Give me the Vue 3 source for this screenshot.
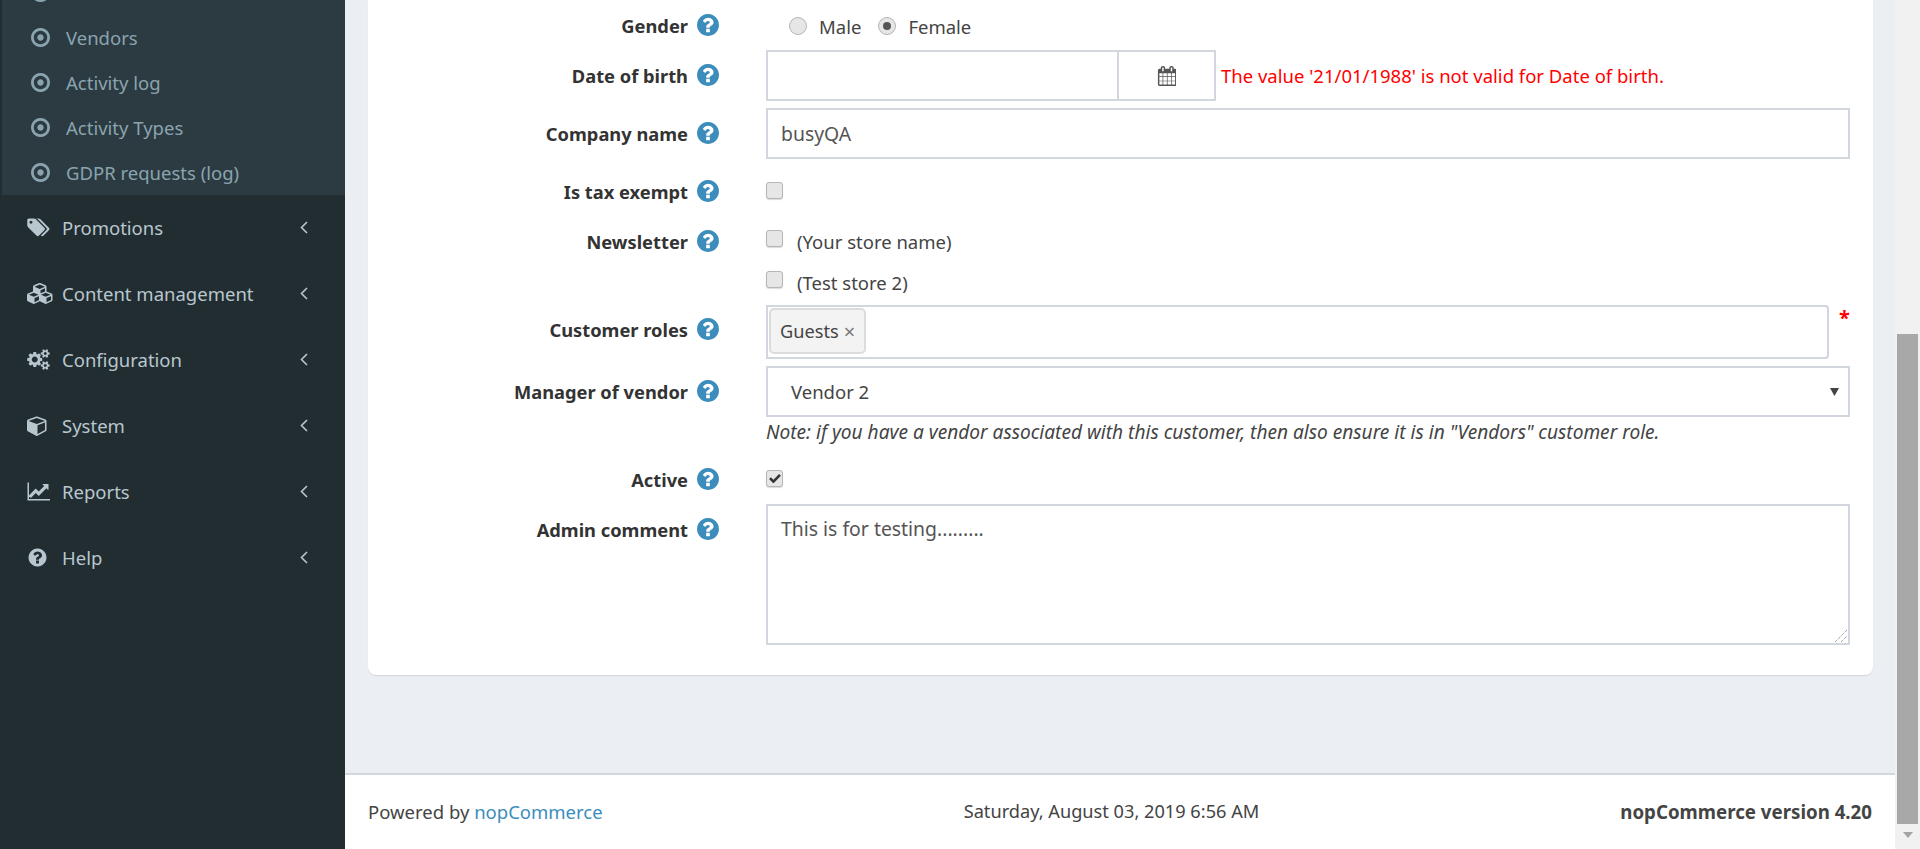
<script setup>
const subItems = ['', 'Vendors', 'Activity log', 'Activity Types', 'GDPR requests (log)'];
const navItems = [
  { label: 'Promotions', box: '0 0 1920 1792', w: 23, path: 'M448 448q0-53-37.5-90.5t-90.5-37.5-90.5 37.5-37.5 90.5 37.5 90.5 90.5 37.5 90.5-37.5 37.5-90.5zm1067 576q0 53-37 90l-491 492q-39 37-91 37-53 0-90-37l-715-716q-38-37-64.5-101t-26.5-117v-416q0-52 38-90t90-38h416q53 0 117 26.5t102 64.5l715 714q37 39 37 91zm384 0q0 53-37 90l-491 492q-39 37-91 37-36 0-59-14t-53-45l470-470q37-37 37-90 0-52-37-91l-715-714q-38-38-102-64.5t-117-26.5h224q53 0 117 26.5t102 64.5l715 714q37 39 37 91z' },
  { label: 'Content management', box: '0 0 2048 1792', w: 27, path: 'M512 1632l384-192v-314l-384 164v342zm-64-454l404-173-404-173-404 173zm1088 454l384-192v-314l-384 164v342zm-64-454l404-173-404-173-404 173zm-448-293l384-165v-266l-384 164v267zm-64-379l441-189-441-189-441 189zm1088 518v416q0 36-19 67t-52 47l-448 224q-25 14-57 14t-57-14l-448-224q-4-2-7-4-2 2-7 4l-448 224q-25 14-57 14t-57-14l-448-224q-33-16-52-47t-19-67v-416q0-38 21.5-70t56.5-48l434-186v-400q0-38 21.5-70t56.5-48l448-192q23-10 50-10t50 10l448 192q35 16 56.5 48t21.5 70v400l434 186q36 16 57 48t21 70z' },
  { label: 'Configuration', box: '0 0 1920 1792', w: 23, path: 'M896 896q0-106-75-181t-181-75-181 75-75 181 75 181 181 75 181-75 75-181zm768 512q0-52-38-90t-90-38-90 38-38 90q0 53 37.5 90.5t90.5 37.5 90.5-37.5 37.5-90.5zm0-1024q0-52-38-90t-90-38-90 38-38 90q0 53 37.5 90.5t90.5 37.5 90.5-37.5 37.5-90.5zm-384 421v185q0 10-7 19.5t-16 10.5l-155 24q-11 35-32 76 34 48 90 115 7 11 7 20 0 12-7 19-23 30-82.5 89.5t-78.5 59.5q-11 0-21-7l-115-90q-37 19-77 31-11 108-23 155-7 24-30 24h-186q-11 0-20-7.5t-10-17.5l-23-153q-34-10-75-31l-118 89q-7 7-20 7-11 0-21-8-144-133-144-160 0-9 7-19 10-14 41-53t47-61q-23-44-35-82l-152-24q-10-1-17-9.5t-7-19.5v-185q0-10 7-19.5t16-10.5l155-24q11-35 32-76-34-48-90-115-7-11-7-20 0-12 7-20 22-30 82-89t79-59q11 0 21 7l115 90q34-18 77-32 11-108 23-154 7-24 30-24h186q11 0 20 7.5t10 17.5l23 153q34 10 75 31l118-89q8-7 20-7 11 0 21 8 144 133 144 160 0 8-7 19-12 16-42 54t-45 60q23 48 34 82l152 23q10 2 17 10.5t7 19.5zm640 533v140q0 16-149 31-12 27-30 52 51 113 51 138 0 4-4 7-122 71-124 71-8 0-46-47t-52-68q-20 2-30 2t-30-2q-14 21-52 68t-46 47q-2 0-124-71-4-3-4-7 0-25 51-138-18-25-30-52-149-15-149-31v-140q0-16 149-31 13-29 30-52-51-113-51-138 0-4 4-7 4-2 35-20t59-34 30-16q8 0 46 46.5t52 67.5q20-2 30-2t30 2q51-71 92-112l6-2q4 0 124 70 4 3 4 7 0 25-51 138 17 23 30 52 149 15 149 31zm0-1024v140q0 16-149 31-12 27-30 52 51 113 51 138 0 4-4 7-122 71-124 71-8 0-46-47t-52-68q-20 2-30 2t-30-2q-14 21-52 68t-46 47q-2 0-124-71-4-3-4-7 0-25 51-138-18-25-30-52-149-15-149-31v-140q0-16 149-31 13-29 30-52-51-113-51-138 0-4 4-7 4-2 35-20t59-34 30-16q8 0 46 46.5t52 67.5q20-2 30-2t30 2q51-71 92-112l6-2q4 0 124 70 4 3 4 7 0 25-51 138 17 23 30 52 149 15 149 31z' },
  { label: 'System', box: '0 0 1792 1792', w: 21, path: 'M896 1629l640-349v-636l-640 233v752zm-64-864l698-254-698-254-698 254zm832-252v768q0 35-18 65t-49 47l-704 384q-28 16-61 16t-61-16l-704-384q-31-17-49-47t-18-65v-768q0-40 23-73t61-47l704-256q22-8 44-8t44 8l704 256q38 14 61 47t23 73z' },
  { label: 'Reports', box: '0 0 2048 1792', w: 25, path: 'M1920 1536v128h-1920v-1536h128v1408h1792zm-128-1248v435q0 21-19.5 29.5t-35.5-7.5l-121-121-633 633q-10 10-23 10t-23-10l-233-233-416 416-192-192 585-585q10-10 23-10t23 10l233 233 464-464-121-121q-16-16-7.5-35.5t29.5-19.5h435q14 0 23 9t9 23z' },
  { label: 'Help', box: '0 0 1792 1792', w: 21, path: 'M1024 1376v-192q0-14-9-23t-23-9h-192q-14 0-23 9t-9 23v192q0 14 9 23t23 9h192q14 0 23-9t9-23zm256-672q0-88-55.5-163t-138.5-116-170-41q-243 0-371 213-15 24 8 42l132 100q7 6 19 6 16 0 25-12 53-68 86-92 34-24 86-24 48 0 85.5 26t37.5 59q0 38-20 61t-68 45q-63 28-115.5 86.5t-52.5 125.5v36q0 14 9 23t23 9h192q14 0 23-9t9-23q0-19 21.5-49.5t54.5-49.5q32-18 49-28.5t46-35 44.5-48 28-60.5 12.5-81zm384 192q0 209-103 385.5t-279.5 279.5-385.5 103-385.5-103-279.5-279.5-103-385.5 103-385.5 279.5-279.5 385.5-103 385.5 103 279.5 279.5 103 385.5z' },
];
const helpPath = navItems[5].path;
const dotPath = 'M1152 896q0 106-75 181t-181 75-181-75-75-181 75-181 181-75 181 75 75 181zm-256-544q-148 0-273 73t-198 198-73 273 73 273 198 198 273 73 273-73 198-198 73-273-73-273-198-198-273-73zm768 544q0 209-103 385.5t-279.5 279.5-385.5 103-385.5-103-279.5-279.5-103-385.5 103-385.5 279.5-279.5 385.5-103 385.5 103 279.5 279.5 103 385.5z';
const calPath = 'M192 1664h288v-288h-288v288zm352 0h320v-288h-320v288zm-352-352h288v-320h-288v320zm352 0h320v-320h-320v320zm-352-384h288v-288h-288v288zm736 736h320v-288h-320v288zm-384-736h320v-288h-320v288zm768 736h288v-288h-288v288zm-384-352h320v-320h-320v320zm-352-864v-288q0-13-9.5-22.5t-22.5-9.5h-64q-13 0-22.5 9.5t-9.5 22.5v288q0 13 9.5 22.5t22.5 9.5h64q13 0 22.5-9.5t9.5-22.5zm736 864h288v-320h-288v320zm-384-384h320v-288h-320v288zm384 0h288v-288h-288v288zm32-480v-288q0-13-9.5-22.5t-22.5-9.5h-64q-13 0-22.5 9.5t-9.5 22.5v288q0 13 9.5 22.5t22.5 9.5h64q13 0 22.5-9.5t9.5-22.5zm384-64v1280q0 52-38 90t-90 38h-1408q-52 0-90-38t-38-90v-1280q0-52 38-90t90-38h128v-96q0-66 47-113t113-47h64q66 0 113 47t47 113v96h384v-96q0-66 47-113t113-47h64q66 0 113 47t47 113v96h128q52 0 90 38t38 90z';
</script>

<template>
  <div class="page">
    <aside class="sidebar">
      <ul class="sub">
        <li v-for="item in subItems" :key="item">
          <svg class="dot" viewBox="128 128 1536 1536"><path :d="dotPath" /></svg>
          <span>{{ item }}</span>
        </li>
      </ul>
      <ul class="nav">
        <li v-for="item in navItems" :key="item.label">
          <span class="nav-icon">
            <svg :viewBox="item.box" :width="item.w" height="21"><path :d="item.path" /></svg>
          </span>
          <span class="nav-label">{{ item.label }}</span>
          <svg class="chev" viewBox="0 0 8 13" width="8" height="13"><path d="M7 1 1.5 6.5 7 12" /></svg>
        </li>
      </ul>
    </aside>

    <div class="main">
      <section class="content">
        <form class="card" @submit.prevent>
          <div class="row row-short">
            <div class="label"><label>Gender</label><svg class="help" viewBox="128 128 1536 1536"><path :d="helpPath" /></svg></div>
            <div class="radios">
              <span class="radio"></span><span class="radio-text">Male</span>
              <span class="radio on"></span><span class="radio-text">Female</span>
            </div>
          </div>

          <div class="row">
            <div class="label"><label>Date of birth</label><svg class="help" viewBox="128 128 1536 1536"><path :d="helpPath" /></svg></div>
            <div class="date-field">
              <div class="date-box">
                <input class="input date-input" type="text" />
                <span class="cal"><svg viewBox="0 0 1664 1792" width="19" height="20"><path :d="calPath" /></svg></span>
              </div>
              <span class="error">The value '21/01/1988' is not valid for Date of birth.</span>
            </div>
          </div>

          <div class="row">
            <div class="label"><label>Company name</label><svg class="help" viewBox="128 128 1536 1536"><path :d="helpPath" /></svg></div>
            <input class="input" type="text" value="busyQA" />
          </div>

          <div class="row row-short">
            <div class="label"><label>Is tax exempt</label><svg class="help" viewBox="128 128 1536 1536"><path :d="helpPath" /></svg></div>
            <div class="check-line"><span class="check"></span></div>
          </div>

          <div class="row row-news">
            <div class="label"><label>Newsletter</label><svg class="help" viewBox="128 128 1536 1536"><path :d="helpPath" /></svg></div>
            <div class="stores">
              <div class="store"><span class="check"></span><span>(Your store name)</span></div>
              <div class="store"><span class="check"></span><span>(Test store 2)</span></div>
            </div>
          </div>

          <div class="row row-roles">
            <div class="label"><label>Customer roles</label><svg class="help" viewBox="128 128 1536 1536"><path :d="helpPath" /></svg></div>
            <div class="roles-field">
              <div class="roles-box">
                <span class="tag">Guests <span class="tag-x">×</span></span>
              </div>
              <span class="star">*</span>
            </div>
          </div>

          <div class="row row-vendor">
            <div class="label"><label>Manager of vendor</label><svg class="help" viewBox="128 128 1536 1536"><path :d="helpPath" /></svg></div>
            <div class="vendor-field">
              <div class="select">
                <span>Vendor 2</span>
                <svg viewBox="0 0 9 8" width="9" height="8"><path d="M0 0h9L4.5 8z" /></svg>
              </div>
              <em class="note">Note: if you have a vendor associated with this customer, then also ensure it is in "Vendors" customer role.</em>
            </div>
          </div>

          <div class="row row-short">
            <div class="label"><label>Active</label><svg class="help" viewBox="128 128 1536 1536"><path :d="helpPath" /></svg></div>
            <div class="check-line">
              <span class="check"><svg viewBox="0 0 12 10" width="12" height="10"><path d="M1 5.2 4.4 8.6 11 1.8" /></svg></span>
            </div>
          </div>

          <div class="row row-comment">
            <div class="label"><label>Admin comment</label><svg class="help" viewBox="128 128 1536 1536"><path :d="helpPath" /></svg></div>
            <div class="comment">
              This is for testing.........
              <svg class="grip" viewBox="0 0 12 12" width="12" height="12"><path d="M0 12 12 0M6 12l6-6" /></svg>
            </div>
          </div>
        </form>
      </section>

      <footer class="footer">
        <div>Powered by <a href="#">nopCommerce</a></div>
        <div class="foot-mid">Saturday, August 03, 2019 6:56 AM</div>
        <div class="foot-right">nopCommerce version 4.20</div>
      </footer>
    </div>

    <div class="scrollbar">
      <div class="track"></div>
      <div class="thumb"></div>
      <div class="arrow"></div>
    </div>
  </div>
</template>

<style>
html, body {
  margin: 0;
  overflow: hidden;
}
</style>

<style scoped>
.page {
  display: flex;
  width: 1920px;
  height: 849px;
  overflow: hidden;
  font-family: "Noto Sans", Lato, sans-serif;
  font-size: 18.5px;
  color: #444;
}

/* sidebar */
.sidebar {
  width: 345px;
  flex: none;
  background: #222d32;
}
.sub {
  list-style: none;
  margin: -30px 0 0 2px;
  padding: 0;
  background: #2c3b41;
  color: #8aa4af;
}
.sub li {
  height: 45px;
  box-sizing: border-box;
  padding: 0 0 1px 29px;
  display: flex;
  align-items: center;
}
.dot {
  width: 19px;
  height: 19px;
  margin-right: 16px;
  fill: #8aa4af;
}
.nav {
  list-style: none;
  margin: 0;
  padding: 0;
  color: #b8c7ce;
}
.nav li {
  height: 66px;
  box-sizing: border-box;
  padding: 0 0 2px 27px;
  display: flex;
  align-items: center;
}
.nav-icon {
  width: 35px;
  display: flex;
}
.nav-icon svg {
  fill: #b8c7ce;
}
.nav-label {
  width: 238px;
}
.chev {
  fill: none;
  stroke: #b8c7ce;
  stroke-width: 1.6;
}

/* content */
.main {
  flex: 1;
  display: flex;
  flex-direction: column;
  min-width: 0;
}
.content {
  flex: 1;
  background: #ebeef3;
  padding: 0 22px 0 23px;
}
.card {
  background: #fff;
  border-radius: 0 0 8px 8px;
  box-shadow: 0 1px 1px rgba(0, 0, 0, 0.1);
  padding-bottom: 30px;
}
.row {
  display: flex;
  align-items: flex-start;
  height: 51px;
  margin-bottom: 7px;
  padding-right: 23px;
}
.row-short { height: 43px; }
.row-news { height: 82px; }
.row-roles { height: 54px; }
.row-vendor { height: 81px; }
.row-comment { height: 141px; margin-bottom: 0; }

.label {
  width: 398px;
  height: 50px;
  flex: none;
  padding-right: 47px;
  box-sizing: border-box;
  display: flex;
  align-items: center;
  justify-content: flex-end;
  gap: 9px;
  font-size: 18.3px;
  font-weight: 700;
  color: #333;
}
.row-roles .label { height: 48px; }
.help {
  width: 22px;
  height: 22px;
  flex: none;
  fill: #3c8dbc;
}
.input {
  flex: 1;
  min-width: 0;
  height: 51px;
  box-sizing: border-box;
  border: 2px solid #d2d6de;
  padding: 0 13px;
  font-family: inherit;
  font-size: 19.4px;
  color: #555;
  outline: none;
  background: #fff;
}

/* radios */
.radios {
  display: flex;
  align-items: center;
  height: 52px;
  padding-left: 23px;
}
.radio {
  width: 18px;
  height: 18px;
  box-sizing: border-box;
  border-radius: 50%;
  border: 1px solid #b5b5b5;
  background: #e6e6e6;
  position: relative;
  margin-right: 12px;
}
.radio.on::after {
  content: "";
  position: absolute;
  left: 4px;
  top: 4px;
  width: 8px;
  height: 8px;
  border-radius: 50%;
  background: #555;
}
.radio-text {
  margin-right: 17px;
}

/* date */
.date-field {
  display: flex;
  align-items: center;
  flex: 1;
}
.date-box {
  display: flex;
  width: 450px;
  flex: none;
}
.date-input {
  width: 353px;
  flex: none;
}
.cal {
  width: 97px;
  height: 51px;
  box-sizing: border-box;
  border: 2px solid #d2d6de;
  border-left: 0;
  display: flex;
  align-items: center;
  justify-content: center;
}
.cal svg {
  fill: #555;
}
.error {
  margin-left: 5px;
  color: #f00;
  white-space: nowrap;
}

/* checks */
.check-line {
  height: 48px;
  display: flex;
  align-items: center;
}
.check {
  width: 17px;
  height: 17px;
  flex: none;
  box-sizing: border-box;
  border: 1px solid #b5b5b5;
  border-radius: 3px;
  background: #e6e6e6;
  box-shadow: 0 1px 1px rgba(0, 0, 0, 0.15);
  display: flex;
  align-items: center;
  justify-content: center;
}
.check svg {
  fill: none;
  stroke: #333;
  stroke-width: 2.6;
}
.stores {
  padding-top: 5px;
}
.store {
  height: 41px;
  display: flex;
  align-items: center;
  gap: 14px;
}
.store .check {
  margin-top: -6px;
}

/* roles */
.roles-field {
  flex: 1;
  display: flex;
  gap: 10px;
}
.roles-box {
  flex: 1;
  height: 54px;
  box-sizing: border-box;
  border: 2px solid #d2d6de;
  border-radius: 0 4px 4px 0;
  padding: 1px;
}
.tag {
  display: inline-flex;
  align-items: center;
  gap: 5px;
  height: 46px;
  box-sizing: border-box;
  padding: 0 9px;
  background: #f3f3f3;
  border: 2px solid #dcdcdc;
  border-radius: 5px;
  font-size: 18.2px;
}
.tag-x {
  color: #777;
  font-size: 20px;
}
.star {
  color: #f00;
  width: 11px;
  font-size: 20px;
  font-weight: 700;
  line-height: 26px;
}

/* vendor */
.vendor-field {
  flex: 1;
}
.select {
  height: 51px;
  box-sizing: border-box;
  border: 2px solid #d2d6de;
  display: flex;
  align-items: center;
  justify-content: space-between;
  padding: 0 9px 0 23px;
}
.select svg {
  fill: #444;
}
.note {
  display: block;
  font-size: 19.1px;
  line-height: 30px;
}

/* comment */
.comment {
  flex: 1;
  height: 141px;
  box-sizing: border-box;
  border: 2px solid #d2d6de;
  padding: 9px 13px;
  font-size: 19.4px;
  color: #555;
  position: relative;
}
.grip {
  position: absolute;
  right: 1px;
  bottom: 1px;
  fill: none;
  stroke: #777;
  stroke-width: 1;
  stroke-dasharray: 1 1;
}

/* footer */
.footer {
  height: 76px;
  flex: none;
  box-sizing: border-box;
  border-top: 2px solid #d2d6de;
  background: #fff;
  display: flex;
  align-items: center;
  justify-content: space-between;
  padding: 0 23px 2px;
}
.foot-mid { font-size: 18.2px; }
.foot-right { font-size: 18.7px; font-weight: 700; }
.footer a {
  color: #3c8dbc;
  text-decoration: none;
}

/* page scrollbar */
.scrollbar {
  width: 25px;
  flex: none;
  background: #f1f1f1;
  display: flex;
  flex-direction: column;
  align-items: flex-end;
  padding-right: 2px;
  box-sizing: border-box;
}
.track {
  height: 334px;
}
.thumb {
  width: 21px;
  height: 490px;
  background: #a8a8a8;
}
.arrow {
  width: 0;
  height: 0;
  margin: 8px 5px 0 0;
  border-left: 5.5px solid transparent;
  border-right: 5.5px solid transparent;
  border-top: 6px solid #a3a3a3;
}
</style>
